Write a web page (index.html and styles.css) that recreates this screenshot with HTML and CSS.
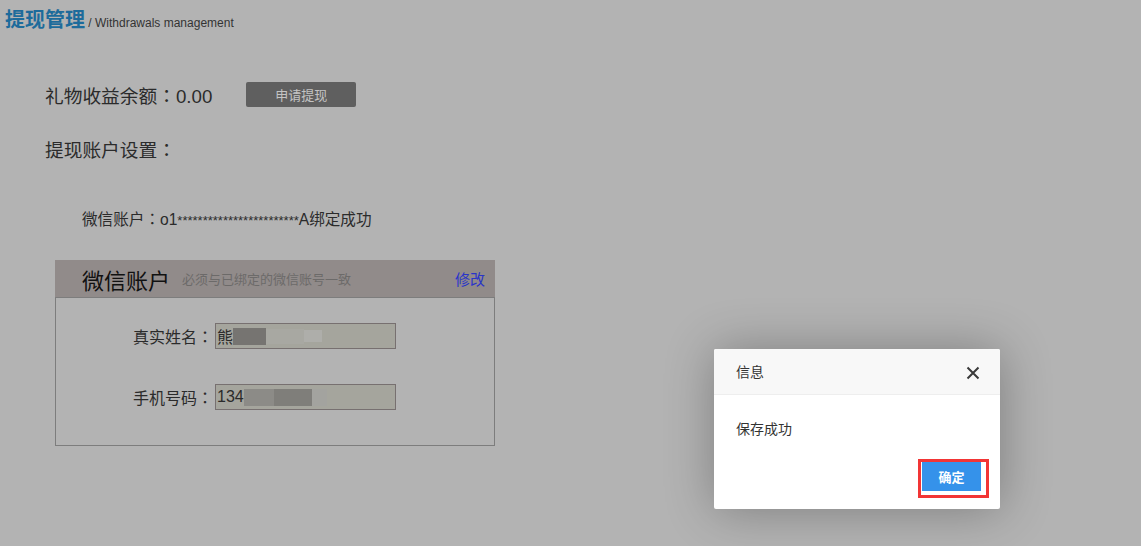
FILE: index.html
```html
<!DOCTYPE html>
<html lang="zh-CN">

<head>
    <meta charset="UTF-8">
    <meta name="viewport" content="width=device-width, initial-scale=1.0">
    <title>提现管理</title>
    <link rel="stylesheet" href="styles.css">
</head>

<body>
    <div class="page">
        <h1 class="page-title">提现管理<small> / Withdrawals management</small></h1>

        <div class="content">
            <div class="balance-row">
                <span class="balance">礼物收益余额<span class="colon">：</span>0.00</span>
                <button class="btn-apply">申请提现</button>
            </div>

            <div class="section-label">提现账户设置<span class="colon">：</span></div>

            <div class="bind-info">微信账户<span class="colon">：</span>o1<span class="stars">************************</span>A绑定成功</div>

            <div class="account-box">
                <div class="account-head">
                    <span class="account-title">微信账户</span>
                    <span class="account-hint">必须与已绑定的微信账号一致</span>
                    <a class="account-edit" href="#">修改</a>
                </div>
                <div class="account-body">
                    <div class="form-row">
                        <label class="form-label">真实姓名<span class="colon">：</span></label>
                        <div class="form-field">熊<span class="blur b1"></span><span class="blur b2"></span><span class="blur b3"></span></div>
                    </div>
                    <div class="form-row">
                        <label class="form-label">手机号码<span class="colon">：</span></label>
                        <div class="form-field">134<span class="blur b4"></span><span class="blur b5"></span><span class="blur b6"></span></div>
                    </div>
                </div>
            </div>
        </div>
    </div>

    <!-- message layer -->
    <div class="layer">
        <div class="layer-title">
            信息
            <svg class="layer-close" width="14" height="14" viewBox="0 0 14 14">
                <path d="M1.5 1.5 L12.5 12.5 M12.5 1.5 L1.5 12.5" stroke="#3a3a3a" stroke-width="2" fill="none" />
            </svg>
        </div>
        <div class="layer-content">保存成功</div>
        <div class="layer-btns">
            <a class="layer-btn" href="#">确定</a>
            <span class="mark"></span>
        </div>
    </div>
</body>

</html>
```

FILE: styles.css
```css
* {
    padding: 0;
    margin: 0;
    box-sizing: border-box;
}

body {
    background-color: #b3b3b3;
    font-family: "Liberation Sans", "Noto Sans CJK SC", sans-serif;
    color: #2b2b2b;
    width: 1141px;
    height: 546px;
    overflow: hidden;
    position: relative;
}

a {
    text-decoration: none;
}

/* full-width colon, centred like on the original */
.colon {
    display: inline-block;
    width: 1em;
    text-align: center;
    line-height: 1;
    font-family: "Noto Sans CJK TC", sans-serif;
}

.page-title {
    padding: 5px 5px 0;
    line-height: 30px;
    font-size: 20px;
    font-weight: bold;
    color: #1d6b9b;
}

.page-title small {
    font-size: 12px;
    font-weight: normal;
    color: #333;
}

.content {
    padding-left: 45px;
}

.balance-row {
    display: flex;
    align-items: center;
    margin-top: 44px;
    height: 25px;
}

.balance {
    font-size: 18.72px;
}

.btn-apply {
    margin-left: 34px;
    width: 110px;
    height: 25px;
    border: 0;
    border-radius: 2px;
    background-color: #5f5f5f;
    color: #c4c4c4;
    font-family: inherit;
    font-size: 13px;
}

.section-label {
    margin-top: 32px;
    height: 24px;
    line-height: 24px;
    font-size: 18.72px;
}

.bind-info {
    margin-top: 47px;
    height: 20px;
    padding-left: 37px;
    line-height: 20px;
    font-size: 15.6px;
}

.stars {
    font-size: 13px;
}

.account-box {
    margin: 30px 0 0 10px;
    width: 440px;
    border: 1px solid #7d7d7d;
}

.account-head {
    display: flex;
    align-items: center;
    height: 38px;
    margin: -1px -1px 0;
    padding: 0 10px 0 27px;
    background-color: #918b8a;
    border-bottom: 1px solid #7d7d7d;
}

.account-title {
    font-size: 22px;
    color: #111;
}

.account-hint {
    margin-left: 12px;
    font-size: 13px;
    color: #6c6a69;
}

.account-edit {
    margin-left: auto;
    font-size: 15px;
    color: #2a35c8;
}

.account-body {
    display: flex;
    flex-direction: column;
    gap: 35px;
    padding: 25px 0 35px 77px;
}

.form-row {
    display: flex;
    align-items: center;
}

.form-label {
    width: 82px;
    font-size: 16px;
}

.form-field {
    display: flex;
    align-items: center;
    width: 181px;
    height: 26px;
    padding-left: 1px;
    border: 1px solid #777070;
    background-color: #a5a59d;
    font-size: 16px;
    overflow: hidden;
    white-space: nowrap;
}

.blur {
    display: inline-block;
    height: 17px;
}

.b1 {
    width: 33px;
    background-color: #767471;
}

.b2 {
    width: 38px;
    height: 15px;
    background-color: #a8a8a2;
}

.b3 {
    width: 18px;
    height: 12px;
    background-color: #aeaeaa;
}

.b4 {
    width: 30px;
    background-color: #8c8b87;
}

.b5 {
    width: 38px;
    background-color: #7f7e7a;
}

.b6 {
    width: 15px;
    background-color: #a3a39f;
}

/* message layer */

.layer {
    position: absolute;
    left: 714px;
    top: 349px;
    width: 286px;
    height: 160px;
    background-color: #fff;
    border-radius: 2px;
    box-shadow: 1px 1px 50px rgba(0, 0, 0, 0.3);
    font-family: "Noto Sans CJK SC", sans-serif;
    color: #333;
}

.layer-title {
    position: relative;
    height: 46px;
    line-height: 45px;
    padding-left: 22px;
    background-color: #f8f8f8;
    border-bottom: 1px solid #eee;
    border-radius: 2px 2px 0 0;
    font-size: 14px;
}

.layer-close {
    position: absolute;
    right: 20px;
    top: 17px;
}

.layer-content {
    padding: 22px 22px 0;
    line-height: 22px;
    font-size: 14px;
}

.layer-btns {
    position: relative;
    display: flex;
    justify-content: flex-end;
    padding: 23px 19px 0 0;
}

.layer-btn {
    width: 59px;
    height: 29px;
    line-height: 29px;
    text-align: center;
    background-color: #3592ea;
    color: #fff;
    font-size: 13px;
    font-weight: bold;
}

.mark {
    position: absolute;
    right: 11px;
    top: 20px;
    width: 71px;
    height: 39px;
    border: 3px solid #f23535;
}
```
